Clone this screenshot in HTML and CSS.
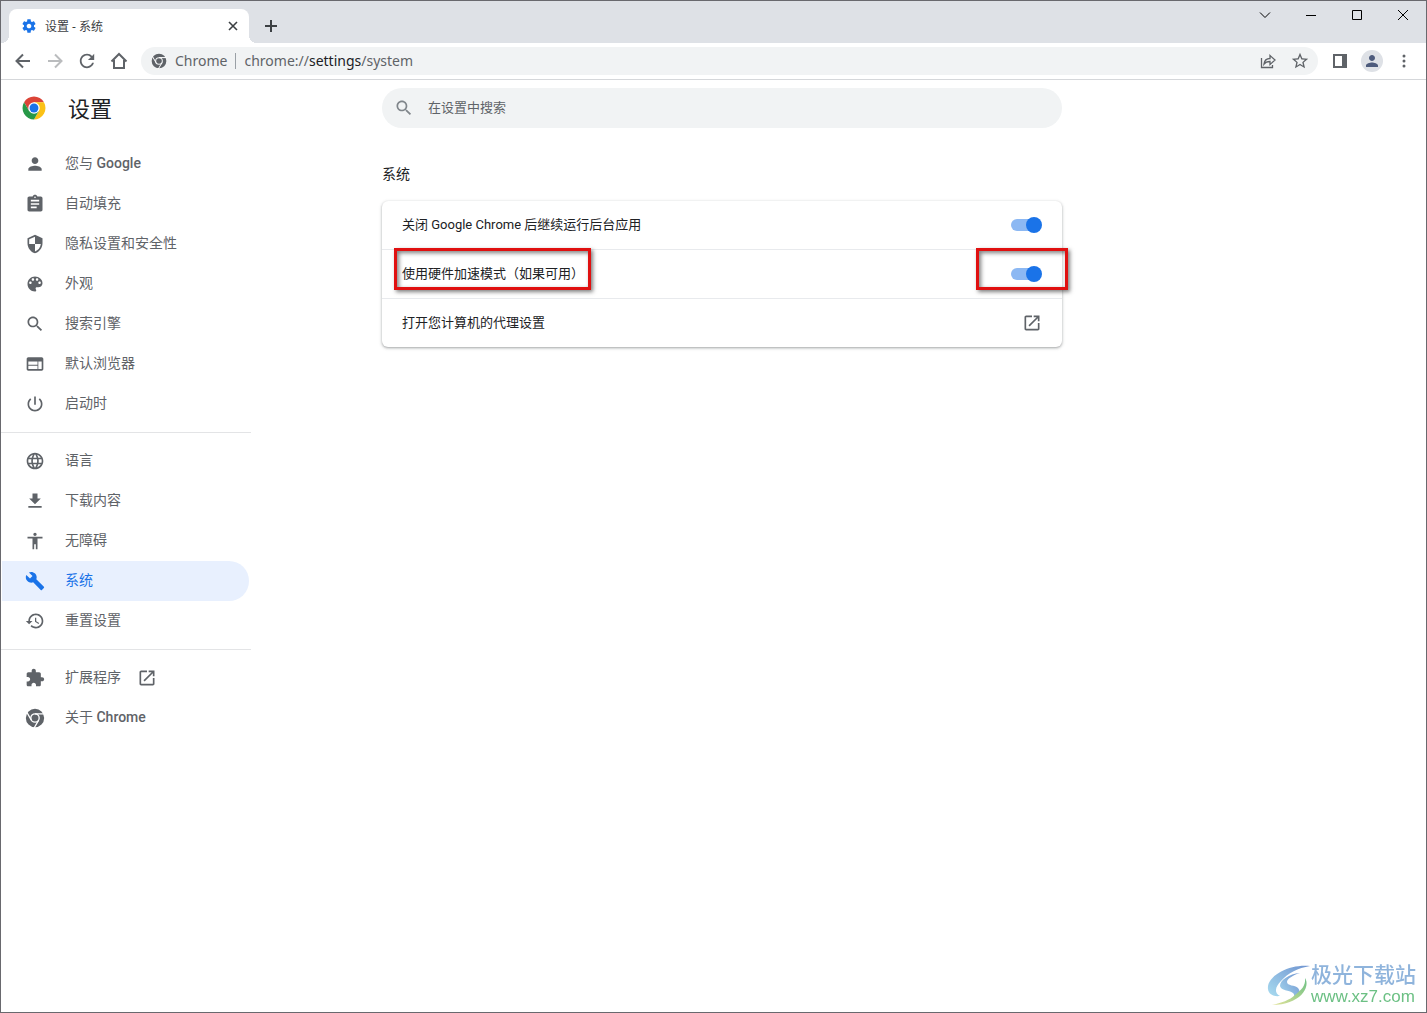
FILE: index.html
```html
<!DOCTYPE html>
<html lang="zh-CN">
<head>
  <meta charset="UTF-8">
  <title>设置 - 系统</title>
  <link rel="stylesheet" href="styles.css">
</head>
<body>
  <svg class="sprite" aria-hidden="true">
    <symbol id="chrome" viewBox="0 0 24 24">
      <path fill="currentColor" fill-rule="evenodd" d="M12 1a11 11 0 1 0 0 22a11 11 0 1 0 0-22zM12 6.200a5.800 5.800 0 1 1 0 11.600a5.800 5.800 0 1 1 0-11.600z"/>
      <circle fill="currentColor" cx="12" cy="12" r="4.200"/>
      <path class="gap" d="M12 6.900h11M16.420 14.550l-5.500 9.530M7.580 14.550l-5.500-9.530"/>
    </symbol>
    <symbol id="search" viewBox="0 0 24 24"><path fill="currentColor" d="M15.500 14h-.79l-.28-.27C15.410 12.590 16 11.110 16 9.500 16 5.910 13.090 3 9.500 3S3 5.910 3 9.500 5.910 16 9.500 16c1.610 0 3.090-.59 4.230-1.570l.27.28v.79l5 4.990L20.490 19l-4.990-5zm-6 0C7.010 14 5 11.990 5 9.500S7.010 5 9.500 5 14 7.010 14 9.500 11.990 14 9.500 14z"/></symbol>
    <symbol id="open" viewBox="0 0 24 24"><path fill="currentColor" d="M19 19H5V5h7V3H5c-1.110 0-2 .9-2 2v14c0 1.100.89 2 2 2h14c1.100 0 2-.9 2-2v-7h-2v7zM14 3v2h3.590l-9.830 9.830 1.410 1.410L19 6.410V10h2V3h-7z"/></symbol>
    <symbol id="person" viewBox="0 0 24 24"><path fill="currentColor" d="M12 12c2.210 0 4-1.790 4-4s-1.790-4-4-4-4 1.790-4 4 1.790 4 4 4zm0 2c-2.670 0-8 1.340-8 4v2h16v-2c0-2.660-5.330-4-8-4z"/></symbol>
  </svg>

  <header class="tab-strip">
    <div class="tab">
      <svg class="favicon" viewBox="0 0 24 24"><path fill="currentColor" d="M19.430 12.980c.04-.32.07-.64.07-.98s-.03-.66-.07-.98l2.110-1.650c.19-.15.24-.42.12-.64l-2-3.460c-.12-.22-.39-.3-.61-.22l-2.490 1c-.52-.4-1.080-.73-1.690-.98l-.38-2.650C14.460 2.180 14.250 2 14 2h-4c-.25 0-.46.18-.49.42l-.38 2.650c-.61.25-1.170.59-1.690.98l-2.490-1c-.23-.09-.49 0-.61.22l-2 3.460c-.13.22-.07.49.12.64l2.110 1.650c-.04.32-.07.65-.07.98s.03.66.07.98l-2.110 1.650c-.19.15-.24.42-.12.64l2 3.460c.12.22.39.3.61.22l2.490-1c.52.4 1.080.73 1.690.98l.38 2.650c.03.24.24.42.49.42h4c.25 0 .46-.18.49-.42l.38-2.650c.61-.25 1.170-.59 1.690-.98l2.490 1c.23.09.49 0 .61-.22l2-3.460c.12-.22.07-.49-.12-.64l-2.110-1.650zM12 15.500c-1.930 0-3.500-1.570-3.500-3.500s1.570-3.500 3.500-3.500 3.500 1.570 3.500 3.500-1.570 3.500-3.500 3.500z"/></svg>
      <span class="tab-title">设置 - 系统</span>
      <button class="tab-close" aria-label="关闭标签页"><svg viewBox="0 0 16 16"><path class="line" d="M4 4l8 8M12 4l-8 8"/></svg></button>
    </div>
    <button class="new-tab" aria-label="打开新的标签页"><svg viewBox="0 0 16 16"><path class="line" d="M8 2v12M2 8h12"/></svg></button>
    <div class="window-buttons">
      <button aria-label="搜索标签页"><svg viewBox="0 0 12 12"><path d="M1 3.500l5 5 5-5"/></svg></button>
      <button aria-label="最小化"><svg viewBox="0 0 12 12"><path d="M1 6.500h10"/></svg></button>
      <button aria-label="最大化"><svg viewBox="0 0 12 12"><path d="M1.500 1.500h9v9h-9z"/></svg></button>
      <button aria-label="关闭"><svg viewBox="0 0 12 12"><path d="M1 1l10 10M11 1L1 11"/></svg></button>
    </div>
  </header>

  <div class="toolbar">
    <div class="tools">
      <button class="tool" aria-label="后退"><svg viewBox="3 3 18 18"><path class="line" d="M19 12H6M12 5.500L5.500 12l6.500 6.500"/></svg></button>
      <button class="tool" aria-label="前进" disabled><svg viewBox="3 3 18 18"><path class="line" d="M5 12h13M12 5.500l6.500 6.500-6.500 6.500"/></svg></button>
      <button class="tool" aria-label="重新加载"><svg viewBox="2 2 20 20"><path fill="currentColor" d="M17.650 6.350C16.200 4.900 14.210 4 12 4c-4.420 0-7.990 3.580-7.990 8s3.570 8 7.990 8c3.730 0 6.840-2.550 7.730-6h-2.080c-.82 2.330-3.040 4-5.650 4-3.310 0-6-2.690-6-6s2.690-6 6-6c1.660 0 3.140.69 4.220 1.780L13 11h7V4l-2.350 2.350z"/></svg></button>
      <button class="tool" aria-label="主页"><svg viewBox="0 0 18 18"><path class="line" d="M1.500 9.500L9 2l7.500 7.500M4 8v8h10V8"/></svg></button>
    </div>
    <div class="omnibox">
      <svg class="site-icon"><use href="#chrome"/></svg>
      <span class="site-name">Chrome</span>
      <span class="url">chrome://<b>settings</b>/system</span>
      <button class="tool" aria-label="分享"><svg viewBox="0 0 18 18"><path class="thin" d="M2.500 6v9.500h11V13M5 12c.5-4 3-5.500 6-5.500V3.500L16 8l-5 4.500v-3c-2.500 0-4.500.5-6 2.500z"/></svg></button>
      <button class="tool" aria-label="为此标签页添加书签"><svg viewBox="1 1 22 22"><path fill="currentColor" d="M22 9.240l-7.190-.62L12 2 9.190 8.630 2 9.240l5.460 4.730L5.820 21 12 17.270 18.180 21l-1.630-7.030L22 9.240zM12 15.400l-3.760 2.270 1-4.280-3.320-2.880 4.380-.38L12 6.100l1.710 4.040 4.380.38-3.320 2.880 1 4.280L12 15.400z"/></svg></button>
    </div>
    <div class="tools">
      <button class="tool" aria-label="侧边栏"><svg viewBox="0 0 18 18"><path fill="currentColor" fill-rule="evenodd" d="M2 2h14v14H2zM4 4v10h7V4z"/></svg></button>
      <button class="tool" aria-label="个人资料"><svg class="avatar"><use href="#person"/></svg></button>
      <button class="tool" aria-label="菜单"><svg viewBox="0 0 18 18"><g fill="currentColor"><circle cx="9" cy="4" r="1.500"/><circle cx="9" cy="9" r="1.500"/><circle cx="9" cy="14" r="1.500"/></g></svg></button>
    </div>
  </div>

  <div class="page">
    <aside class="sidebar">
      <div class="brand">
        <svg class="logo" viewBox="1 1 46 46">
          <path fill="#db4437" d="M4.950 13A22 22 0 0 1 43.050 13H24L14.470 29.500z"/>
          <path fill="#fbc116" d="M43.050 13A22 22 0 0 1 24 46L33.530 29.500 24 13z"/>
          <path fill="#279847" d="M24 46A22 22 0 0 1 4.950 13L14.470 29.500H33.530z"/>
          <circle fill="#fff" cx="24" cy="24" r="11"/>
          <circle fill="#1a73e8" cx="24" cy="24" r="8.500"/>
        </svg>
        <h1>设置</h1>
      </div>
      <nav class="menu">
        <a href="#people"><svg><use href="#person"/></svg><span>您与 <b>Google</b></span></a>
        <a href="#autofill"><svg viewBox="0 0 24 24"><path fill="currentColor" d="M19 3h-4.180C14.400 1.840 13.300 1 12 1c-1.300 0-2.400.84-2.820 2H5c-1.100 0-2 .9-2 2v14c0 1.100.9 2 2 2h14c1.100 0 2-.9 2-2V5c0-1.100-.9-2-2-2zm-7 0c.55 0 1 .45 1 1s-.45 1-1 1-1-.45-1-1 .45-1 1-1zm2 14H7v-2h7v2zm3-4H7v-2h10v2zm0-4H7V7h10v2z"/></svg><span>自动填充</span></a>
        <a href="#privacy"><svg viewBox="0 0 24 24"><path fill="currentColor" d="M12 1L3 5v6c0 5.550 3.840 10.740 9 12 5.160-1.260 9-6.450 9-12V5l-9-4zm0 10.990h7c-.53 4.120-3.280 7.790-7 8.940V12H5V6.300l7-3.110v8.800z"/></svg><span>隐私设置和安全性</span></a>
        <a href="#appearance"><svg viewBox="0 0 24 24"><path fill="currentColor" d="M12 3c-4.970 0-9 4.030-9 9s4.030 9 9 9c.83 0 1.500-.67 1.500-1.500 0-.39-.15-.74-.39-1.010-.23-.26-.38-.61-.38-.99 0-.83.67-1.500 1.500-1.500H16c2.760 0 5-2.240 5-5 0-4.420-4.030-8-9-8zm-5.500 9c-.83 0-1.500-.67-1.500-1.500S5.670 9 6.500 9 8 9.670 8 10.500 7.330 12 6.500 12zm3-4C8.670 8 8 7.330 8 6.500S8.670 5 9.500 5s1.500.67 1.500 1.500S10.330 8 9.500 8zm5 0c-.83 0-1.500-.67-1.500-1.500S13.670 5 14.500 5s1.500.67 1.500 1.500S15.330 8 14.500 8zm3 4c-.83 0-1.500-.67-1.500-1.500S16.670 9 17.500 9s1.500.67 1.500 1.500-.67 1.500-1.500 1.500z"/></svg><span>外观</span></a>
        <a href="#engine"><svg><use href="#search"/></svg><span>搜索引擎</span></a>
        <a href="#default"><svg viewBox="0 0 24 24"><path fill="currentColor" d="M20 4H4c-1.100 0-1.990.9-1.990 2L2 18c0 1.100.9 2 2 2h16c1.100 0 2-.9 2-2V6c0-1.100-.9-2-2-2zm-5 14H4v-4h11v4zm0-5H4V9h11v4zm5 5h-4V9h4v9z"/></svg><span>默认浏览器</span></a>
        <a href="#startup"><svg viewBox="0 0 24 24"><path fill="currentColor" d="M13 3h-2v10h2V3zm4.830 2.170l-1.420 1.420C17.990 7.860 19 9.810 19 12c0 3.870-3.130 7-7 7s-7-3.130-7-7c0-2.190 1.010-4.140 2.580-5.420L6.170 5.170C4.230 6.820 3 9.260 3 12c0 4.970 4.030 9 9 9s9-4.030 9-9c0-2.740-1.230-5.180-3.170-6.830z"/></svg><span>启动时</span></a>
        <hr>
        <a href="#languages"><svg viewBox="0 0 24 24"><path fill="currentColor" d="M11.990 2C6.470 2 2 6.480 2 12s4.470 10 9.990 10C17.520 22 22 17.520 22 12S17.520 2 11.990 2zm6.930 6h-2.950c-.32-1.250-.78-2.450-1.380-3.560 1.840.63 3.370 1.910 4.330 3.560zM12 4.040c.83 1.200 1.480 2.530 1.910 3.960h-3.820c.43-1.430 1.080-2.760 1.910-3.960zM4.260 14C4.100 13.360 4 12.690 4 12s.1-1.360.26-2h3.380c-.08.66-.14 1.320-.14 2 0 .68.06 1.340.14 2H4.260zm.82 2h2.950c.32 1.250.78 2.450 1.380 3.560-1.840-.63-3.370-1.900-4.330-3.560zm2.950-8H5.080c.96-1.660 2.490-2.930 4.330-3.560C8.810 5.550 8.350 6.750 8.030 8zM12 19.960c-.83-1.200-1.480-2.530-1.910-3.960h3.820c-.43 1.430-1.080 2.760-1.910 3.960zM14.340 14H9.660c-.09-.66-.16-1.320-.16-2 0-.68.07-1.350.16-2h4.680c.09.65.16 1.320.16 2 0 .68-.07 1.340-.16 2zm.25 5.560c.6-1.110 1.060-2.310 1.380-3.560h2.950c-.96 1.650-2.490 2.930-4.330 3.560zM16.360 14c.08-.66.14-1.320.14-2 0-.68-.06-1.340-.14-2h3.380c.16.64.26 1.310.26 2s-.1 1.360-.26 2h-3.380z"/></svg><span>语言</span></a>
        <a href="#downloads"><svg viewBox="0 0 24 24"><path fill="currentColor" d="M19 9h-4V3H9v6H5l7 7 7-7zM4 18v2h16v-2H4z"/></svg><span>下载内容</span></a>
        <a href="#accessibility"><svg viewBox="0 0 24 24"><path fill="currentColor" d="M12 2c1.100 0 2 .9 2 2s-.9 2-2 2-2-.9-2-2 .9-2 2-2zm9 7h-6v13h-2v-6h-2v6H9V9H3V7h18v2z"/></svg><span>无障碍</span></a>
        <a class="selected" href="#system"><svg viewBox="0 0 24 24"><path fill="currentColor" d="M22.700 19l-9.100-9.100c.9-2.300.4-5-1.500-6.900-2-2-5-2.400-7.400-1.300L9 6 6 9 1.600 4.700C.4 7.100.9 10.100 2.900 12.100c1.900 1.900 4.600 2.400 6.900 1.500l9.100 9.100c.4.4 1 .4 1.400 0l2.300-2.300c.5-.4.5-1.100.1-1.400z"/></svg><span>系统</span></a>
        <a href="#reset"><svg viewBox="0 0 24 24"><path fill="currentColor" d="M13 3c-4.970 0-9 4.030-9 9H1l3.890 3.890.07.14L9 12H6c0-3.870 3.130-7 7-7s7 3.130 7 7-3.130 7-7 7c-1.930 0-3.680-.79-4.940-2.060l-1.420 1.420C8.270 19.990 10.510 21 13 21c4.970 0 9-4.030 9-9s-4.030-9-9-9zm-1 5v5l4.280 2.540.72-1.210-3.500-2.080V8H12z"/></svg><span>重置设置</span></a>
        <hr>
        <a href="#extensions"><svg viewBox="0 0 24 24"><path fill="currentColor" d="M20.500 11H19V7c0-1.100-.9-2-2-2h-4V3.500C13 2.120 11.880 1 10.500 1S8 2.120 8 3.500V5H4c-1.100 0-1.990.9-1.990 2v3.800H3.500c1.490 0 2.700 1.210 2.700 2.700s-1.210 2.700-2.700 2.700H2V20c0 1.100.9 2 2 2h3.800v-1.500c0-1.490 1.210-2.700 2.700-2.700 1.490 0 2.700 1.210 2.700 2.700V22H17c1.100 0 2-.9 2-2v-4h1.500c1.380 0 2.500-1.120 2.500-2.500S21.880 11 20.500 11z"/></svg><span>扩展程序</span><svg class="external"><use href="#open"/></svg></a>
        <a href="#about"><svg><use href="#chrome"/></svg><span>关于 <b>Chrome</b></span></a>
      </nav>
    </aside>

    <main class="main">
      <label class="search-box">
        <svg><use href="#search"/></svg>
        <input type="text" placeholder="在设置中搜索" aria-label="在设置中搜索">
      </label>
      <h2>系统</h2>
      <section class="card">
        <div class="row">
          <label for="background">关闭 Google Chrome 后继续运行后台应用</label>
          <input class="toggle" type="checkbox" id="background" checked>
        </div>
        <div class="row">
          <label for="hardware">使用硬件加速模式（如果可用）</label>
          <input class="toggle" type="checkbox" id="hardware" checked>
          <span class="mark mark-label"></span>
          <span class="mark mark-toggle"></span>
        </div>
        <div class="row">
          <span>打开您计算机的代理设置</span>
          <button class="row-open" aria-label="打开您计算机的代理设置"><svg><use href="#open"/></svg></button>
        </div>
      </section>
    </main>
  </div>

  <div class="watermark">
    <svg viewBox="0 0 44 42">
      <defs>
        <linearGradient id="wave" x1="0" y1="1" x2="1" y2="0"><stop offset="0" stop-color="#a9dcf0"/><stop offset="1" stop-color="#6f93d0"/></linearGradient>
        <linearGradient id="leaf" x1="0" y1="1" x2="1" y2="0"><stop offset="0" stop-color="#e3e39a"/><stop offset="1" stop-color="#6cc084"/></linearGradient>
      </defs>
      <path fill="url(#wave)" d="M43 2C25 0 4 9 1 22c-1 7 4 11 12 10C7 29 8 23 14 17 21 9 31 4 43 2z"/>
      <path fill="url(#wave)" d="M33 9C22 10 13 16 13 22c1 5 9 4 13 7 3 3 0 6-4 8 9-2 13-9 9-13-3-3-11-2-11-6 0-3 6-7 13-9z"/>
      <path fill="url(#leaf)" d="M38 14c6 9-5 27-33 27 9-2 18-5 23-10 6-5 11-9 10-17z"/>
    </svg>
    <div class="watermark-text">
      <strong>极光下载站</strong>
      <span>www.xz7.com</span>
    </div>
  </div>
</body>
</html>
```

FILE: styles.css
```css
* {
  box-sizing: border-box;
}

body {
  display: flex;
  flex-direction: column;
  min-height: 100vh;
  margin: 0;
  border: 1px solid #69696e;
  background: #fff;
  color: #202124;
  font-family: Roboto, "Noto Sans CJK SC", sans-serif;
  font-size: 13px;
}

button {
  display: flex;
  align-items: center;
  justify-content: center;
  padding: 0;
  border: none;
  background: none;
  color: inherit;
}

svg {
  flex: none;
}

.sprite {
  position: absolute;
  width: 0;
  height: 0;
}

.gap {
  fill: none;
  stroke: #fff;
  stroke-width: 1.5;
}

.line {
  fill: none;
  stroke: currentColor;
  stroke-width: 2;
}

.thin {
  fill: none;
  stroke: currentColor;
  stroke-width: 1.3;
}

/* tab strip */
.tab-strip {
  display: flex;
  height: 42px;
  padding-left: 8px;
  background: #dee1e6;
}

.tab {
  position: relative;
  display: flex;
  align-items: center;
  width: 240px;
  height: 34px;
  margin-top: 8px;
  padding: 0 8px 0 12px;
  border-radius: 8px 8px 0 0;
  background: #fff;
}

.tab::before,
.tab::after {
  content: "";
  position: absolute;
  bottom: 0;
  width: 8px;
  height: 8px;
}

.tab::before {
  right: 100%;
  background: radial-gradient(circle at 0 0, transparent 8px, #fff 8px);
}

.tab::after {
  left: 100%;
  background: radial-gradient(circle at 100% 0, transparent 8px, #fff 8px);
}

.favicon {
  width: 16px;
  height: 16px;
  margin-right: 8px;
  color: #1a73e8;
}

.tab-title {
  flex: 1;
  font-family: "Noto Sans", "Noto Sans CJK SC", sans-serif;
  font-size: 12px;
  color: #3c4043;
}

.tab-close,
.tab-close svg,
.new-tab svg {
  width: 16px;
  height: 16px;
  color: #3c4043;
}

.tab-close .line {
  stroke-width: 1.6;
}

.new-tab {
  width: 28px;
  height: 28px;
  margin: 11px 0 0 8px;
}

.window-buttons {
  display: flex;
  margin-left: auto;
}

.window-buttons button {
  width: 46px;
  height: 28px;
}

.window-buttons svg {
  width: 12px;
  height: 12px;
  fill: none;
  stroke: #000;
}

/* toolbar */
.toolbar {
  display: flex;
  align-items: center;
  gap: 8px;
  height: 37px;
  padding: 0 8px;
  border-bottom: 1px solid #d5d7da;
}

.tools {
  display: flex;
  gap: 4px;
}

.tool {
  width: 28px;
  height: 28px;
  color: #5f6368;
}

.tool:disabled {
  color: #babcbe;
}

.tool svg {
  width: 18px;
  height: 18px;
}

.tool .avatar {
  width: 22px;
  height: 22px;
  padding: 2px;
  border-radius: 50%;
  background: #dee1e6;
  color: #4d5b7c;
}

.omnibox {
  display: flex;
  flex: 1;
  align-items: center;
  gap: 4px;
  height: 28px;
  padding: 0 4px 0 10px;
  border-radius: 14px;
  background: #f1f3f4;
  color: #5f6368;
  font-family: "Noto Sans", sans-serif;
  font-size: 14px;
  line-height: 16px;
}

.omnibox .gap {
  stroke: #f1f3f4;
}

.site-icon {
  width: 16px;
  height: 16px;
  margin-right: 4px;
}

.site-name {
  padding-right: 8px;
  border-right: 1px solid #9aa0a6;
}

.url {
  flex: 1;
  padding-left: 4px;
}

.url b {
  color: #202124;
  font-weight: 400;
}

/* settings page */
.page {
  display: grid;
  flex: 1;
  grid-template-columns: minmax(266px, 381fr) minmax(0, 680px) 364fr;
}

.sidebar {
  width: 250px;
}

.brand {
  display: flex;
  align-items: center;
  gap: 22px;
  height: 56px;
  padding-left: 21px;
}

.logo {
  width: 24px;
  height: 24px;
}

.brand h1 {
  margin: 0;
  padding-bottom: 2px;
  font-size: 22px;
  font-weight: 400;
}

.menu {
  padding-top: 8px;
}

.menu a {
  display: flex;
  align-items: center;
  height: 40px;
  margin: 0 2px 0 1px;
  padding-left: 23px;
  border-radius: 0 20px 20px 0;
  color: #5f6368;
  font-size: 14px;
  text-decoration: none;
}

.menu span {
  margin-left: 20px;
  padding-bottom: 4px;
}

.menu b {
  font-weight: 500;
}

.menu svg,
.search-box svg,
.row-open svg {
  width: 20px;
  height: 20px;
}

.menu .external {
  margin-left: 16px;
}

.menu .selected {
  background: #e8f0fe;
  color: #1a73e8;
}

.menu hr {
  height: 1px;
  margin: 8px 0;
  border: none;
  background: #e3e4e6;
}

.search-box {
  display: flex;
  align-items: center;
  gap: 14px;
  height: 40px;
  margin-top: 8px;
  padding: 0 20px 0 12px;
  border-radius: 20px;
  background: #f1f3f4;
  color: #80868b;
}

.search-box input {
  flex: 1;
  padding: 0 0 2px;
  border: none;
  outline: none;
  background: none;
  font: inherit;
}

.search-box input::placeholder {
  color: #5f6368;
}

.main h2 {
  margin: 36px 0 17px;
  font-size: 14px;
  font-weight: 400;
  line-height: 20px;
}

.card {
  border-radius: 6px;
  box-shadow: 0 1px 2px rgba(60, 64, 67, 0.3), 0 1px 3px 1px rgba(60, 64, 67, 0.15);
}

.row {
  position: relative;
  display: flex;
  align-items: center;
  justify-content: space-between;
  height: 48px;
  padding: 0 20px;
}

.row + .row {
  height: 49px;
  border-top: 1px solid #e8eaed;
}

.row label,
.row > span {
  padding-bottom: 4px;
}

.toggle {
  position: relative;
  width: 31px;
  height: 16px;
  margin: 0;
  appearance: none;
}

.toggle::before {
  content: "";
  position: absolute;
  inset: 2px 2px 2px 0;
  border-radius: 6px;
  background: #8cb8f3;
}

.toggle::after {
  content: "";
  position: absolute;
  right: 0;
  width: 16px;
  height: 16px;
  border-radius: 50%;
  background: #1a73e8;
}

.row-open {
  color: #5f6368;
}

/* red highlight frames over the hardware acceleration row */
.row .mark {
  position: absolute;
  top: -2px;
  height: 42px;
  padding: 0;
  border: 3px solid #e01010;
  box-shadow: 2px 2px 4px rgba(0, 0, 0, 0.5), inset 2px 2px 4px rgba(0, 0, 0, 0.5);
  pointer-events: none;
}

.mark-label {
  left: 12px;
  width: 197px;
}

.mark-toggle {
  right: -6px;
  width: 92px;
}

.watermark {
  position: fixed;
  right: 11px;
  bottom: 6px;
  display: flex;
  align-items: center;
}

.watermark svg {
  width: 44px;
  height: 42px;
}

.watermark-text {
  display: flex;
  flex-direction: column;
  color: #6cc084;
  font-family: "Liberation Sans", "Noto Sans CJK SC", sans-serif;
  font-size: 17px;
  line-height: 20px;
}

.watermark strong {
  color: #8fb4dc;
  font-size: 21px;
  font-weight: 500;
  line-height: 24px;
}
```
